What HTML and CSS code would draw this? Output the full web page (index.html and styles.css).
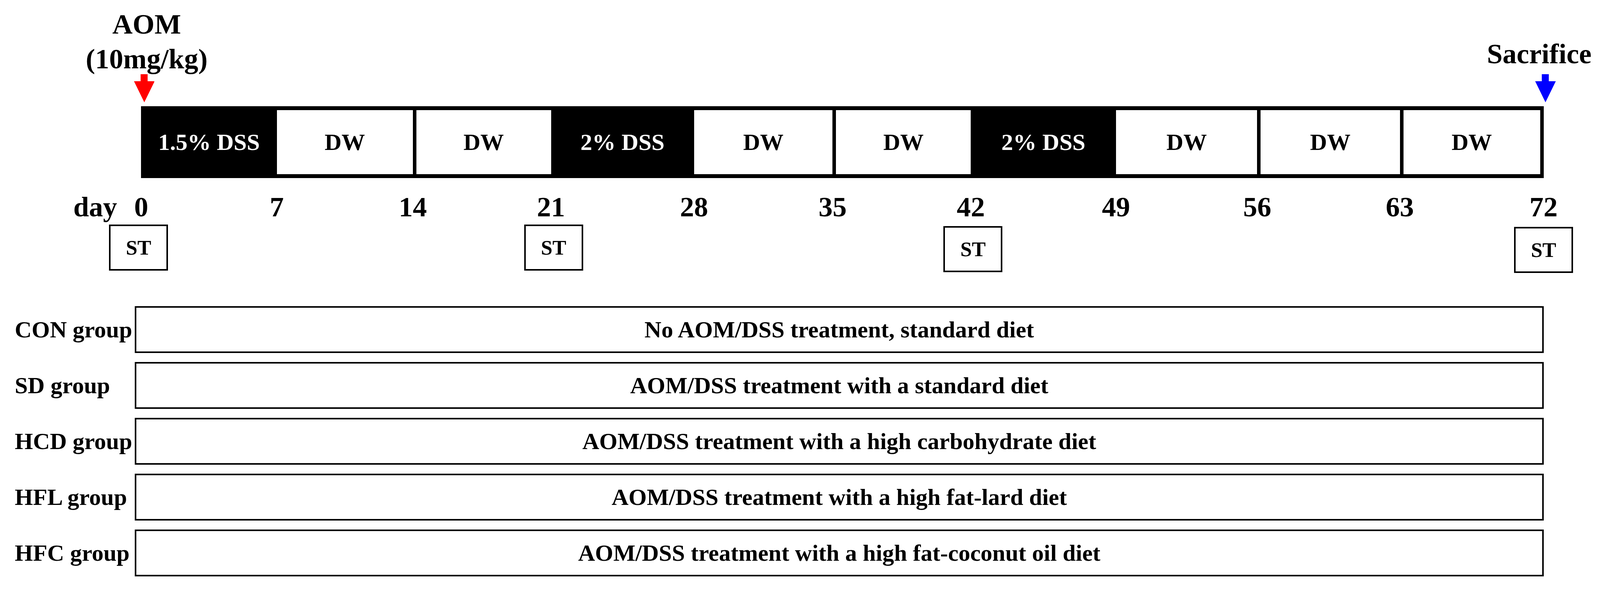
FILE: index.html
```html
<!DOCTYPE html>
<html lang="en">
<head>
<meta charset="utf-8">
<title>AOM/DSS experimental design</title>
<link rel="stylesheet" href="styles.css">
</head>
<body>
<div class="figure">
  <div class="top">
    <div class="marker marker-aom">
      <div class="marker-text">AOM<br>(10mg/kg)</div>
      <svg class="arrow" viewBox="0 0 56 72" preserveAspectRatio="none" aria-hidden="true">
        <rect x="18" y="0" width="19" height="20" fill="#ff0000"/>
        <polygon points="0,18 56,18 28,72" fill="#ff0000"/>
      </svg>
    </div>
    <div class="marker marker-sac">
      <div class="marker-text">Sacrifice</div>
      <svg class="arrow" viewBox="0 0 56 72" preserveAspectRatio="none" aria-hidden="true">
        <rect x="18" y="0" width="19" height="20" fill="#0000ff"/>
        <polygon points="0,18 56,18 28,72" fill="#0000ff"/>
      </svg>
    </div>
  </div>

  <div class="bar">
    <div class="seg dss">1.5% DSS</div>
    <div class="seg dw">DW</div>
    <div class="seg dw">DW</div>
    <div class="seg dss">2% DSS</div>
    <div class="seg dw">DW</div>
    <div class="seg dw">DW</div>
    <div class="seg dss">2% DSS</div>
    <div class="seg dw">DW</div>
    <div class="seg dw">DW</div>
    <div class="seg dw last">DW</div>
  </div>

  <div class="days">
    <div class="day-label">day</div>
    <div class="ticks">
      <div class="tick">0</div>
      <div class="tick">7</div>
      <div class="tick">14</div>
      <div class="tick">21</div>
      <div class="tick">28</div>
      <div class="tick">35</div>
      <div class="tick">42</div>
      <div class="tick">49</div>
      <div class="tick">56</div>
      <div class="tick">63</div>
      <div class="tick">72</div>
    </div>
  </div>

  <div class="st-row">
    <div class="anchor c1"><div class="st st-a">ST</div></div>
    <div class="anchor c4"><div class="st st-b">ST</div></div>
    <div class="anchor c7"><div class="st st-c">ST</div></div>
    <div class="anchor c11"><div class="st st-d">ST</div></div>
  </div>

  <div class="groups">
    <div class="group">
      <div class="group-label">CON group</div>
      <div class="group-box">No AOM/DSS treatment, standard diet</div>
    </div>
    <div class="group">
      <div class="group-label">SD group</div>
      <div class="group-box">AOM/DSS treatment with a standard diet</div>
    </div>
    <div class="group">
      <div class="group-label">HCD group</div>
      <div class="group-box">AOM/DSS treatment with a high carbohydrate diet</div>
    </div>
    <div class="group">
      <div class="group-label">HFL group</div>
      <div class="group-box">AOM/DSS treatment with a high fat-lard diet</div>
    </div>
    <div class="group">
      <div class="group-label">HFC group</div>
      <div class="group-box">AOM/DSS treatment with a high fat-coconut oil diet</div>
    </div>
  </div>
</div>
</body>
</html>
```

FILE: styles.css
```css
:root {
  /* one horizontal unit = 1/4341 of the window width */
  --u: calc(100vw / 4341);
}

html, body {
  margin: 0;
  padding: 0;
  background: #ffffff;
  overflow: hidden;
}

.figure {
  width: 100vw;
  height: 1516px;
  overflow: hidden;
  background: #ffffff;
  color: #000000;
  font-family: "Liberation Serif", "Times New Roman", serif;
  font-weight: 700;
}

/* ---------- annotations above the timeline ---------- */
.top {
  height: 262px;
  box-sizing: border-box;
  display: flex;
  justify-content: space-between;
  align-items: flex-end;
  padding: 0 calc(15 * var(--u)) 0 calc(228 * var(--u));
}

.marker {
  display: flex;
  flex-direction: column;
  align-items: center;
}

.marker-text {
  font-size: 72px;
  line-height: 89px;
  text-align: center;
  white-space: nowrap;
}

.arrow {
  display: block;
  flex: none;
  width: calc(56 * var(--u));
  height: 72px;
}

.marker-aom {
  width: calc(340 * var(--u));
}

.marker-aom .arrow {
  margin-top: -6px;
  margin-right: calc(14 * var(--u));
}

.marker-sac {
  width: calc(300 * var(--u));
}

.marker-sac .arrow {
  margin-top: 7px;
  margin-left: calc(34 * var(--u));
}

/* ---------- timeline bar ---------- */
.bar {
  margin-top: 10px;
  margin-left: calc(383 * var(--u));
  width: calc(3805 * var(--u));
  height: 184px;
  box-sizing: border-box;
  border-top: 10px solid #000;
  border-bottom: 10px solid #000;
  display: grid;
  grid-template-columns:
    calc(368 * var(--u)) calc(369 * var(--u)) calc(375 * var(--u))
    calc(388 * var(--u)) calc(376 * var(--u)) calc(375 * var(--u))
    calc(394 * var(--u)) calc(383 * var(--u)) calc(387 * var(--u))
    calc(390 * var(--u));
}

.seg {
  box-sizing: border-box;
  display: flex;
  align-items: center;
  justify-content: center;
  font-size: 60px;
  white-space: nowrap;
}

.seg.dss {
  background: #000;
  color: #fff;
}

.seg.dw {
  background: #fff;
  color: #000;
}

.seg.dw + .seg.dw {
  border-left: 9px solid #000;
}

.seg.last {
  border-right: 9px solid #000;
}

/* ---------- day ticks ---------- */
.days {
  margin-top: 30px;
  display: flex;
  padding-left: calc(199 * var(--u));
  font-size: 72px;
  line-height: 89px;
}

.day-label {
  width: calc(184 * var(--u));
  flex: none;
}

.ticks,
.st-row {
  display: grid;
  grid-template-columns:
    calc(368 * var(--u)) calc(369 * var(--u)) calc(375 * var(--u))
    calc(388 * var(--u)) calc(376 * var(--u)) calc(375 * var(--u))
    calc(394 * var(--u)) calc(383 * var(--u)) calc(387 * var(--u))
    calc(390 * var(--u)) 0px;
}

.tick,
.anchor {
  width: 0;
  display: flex;
  justify-content: center;
  white-space: nowrap;
}

/* ---------- ST boxes ---------- */
.st-row {
  margin-left: calc(383 * var(--u));
  height: 118px;
}

.c1 { grid-column: 1; }
.c4 { grid-column: 4; }
.c7 { grid-column: 7; }
.c11 { grid-column: 11; }

.st {
  flex: none;
  width: calc(160 * var(--u));
  height: 118px;
  box-sizing: border-box;
  border: 4px solid #000;
  display: flex;
  align-items: center;
  justify-content: center;
  font-size: 53px;
}

.st-a { margin-right: calc(14 * var(--u)); }
.st-b { margin-left: calc(14 * var(--u)); }
.st-c { margin-left: calc(12 * var(--u)); margin-top: 4px; }
.st-d { margin-top: 6px; }

/* ---------- groups ---------- */
.groups {
  margin-top: 91px;
  padding-left: calc(40 * var(--u));
  display: flex;
  flex-direction: column;
  gap: 23px;
}

.group {
  display: grid;
  grid-template-columns: calc(326 * var(--u)) calc(3822 * var(--u));
  height: 120px;
  align-items: center;
}

.group-label {
  font-size: 60px;
  white-space: nowrap;
}

.group-box {
  height: 100%;
  box-sizing: border-box;
  border: 4px solid #000;
  display: flex;
  align-items: center;
  justify-content: center;
  font-size: 60px;
  white-space: nowrap;
}
```
